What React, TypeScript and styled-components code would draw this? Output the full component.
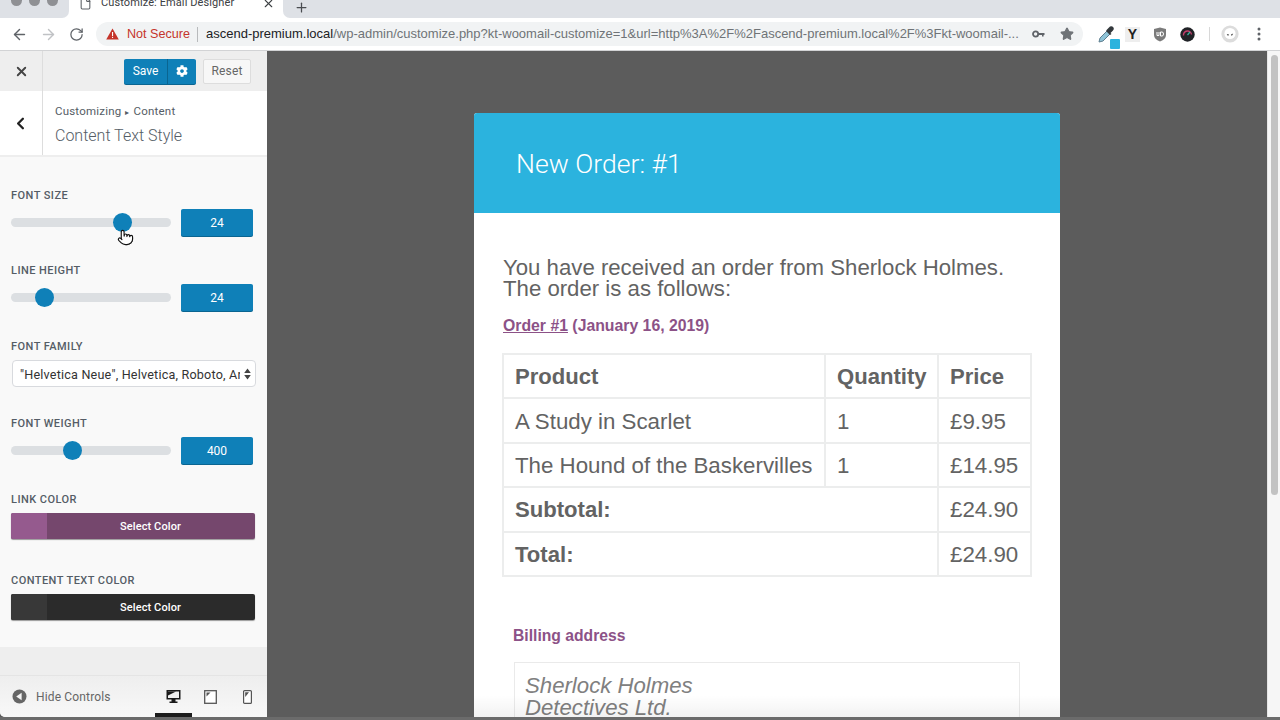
import React from 'react';
import styled, { createGlobalStyle } from 'styled-components';
import { ArrowLeft, ArrowRight, RotateCw, X, Plus, Star, File, ChevronLeft, Pointer } from 'lucide-react';
import { FaCog } from 'react-icons/fa';

const GlobalStyle = createGlobalStyle`
  html, body {
    margin: 0;
    padding: 0;
    height: 720px;
    overflow: hidden;
    background: #5c5c5c;
    font-family: Roboto, "Liberation Sans", sans-serif;
  }
`;

const Slider = ({ pos, value }: { pos: number; value: string }) => (
  <SliderRow>
    <Track>
      <Thumb $pos={pos} />
    </Track>
    <ValueBox>{value}</ValueBox>
  </SliderRow>
);

const ColorPicker = ({ color, swatch }: { color: string; swatch: string }) => (
  <ColorButton $color={color}>
    <Swatch $color={swatch} />
    <ColorLabel>Select Color</ColorLabel>
  </ColorButton>
);

const App = () => (
  <Window>
    <GlobalStyle />
    <TabStrip>
      <Lights>
        <Light />
        <Light />
        <Light />
      </Lights>
      <Tab>
        <File size={13} color="#5f6368" />
        <TabTitle>Customize: Email Designer</TabTitle>
        <X size={13} color="#3c4043" />
      </Tab>
      <NewTab>
        <Plus size={15} color="#4a4d51" />
      </NewTab>
    </TabStrip>

    <AddressRow>
      <NavIcons>
        <ArrowLeft size={17} color="#5f6368" />
        <ArrowRight size={17} color="#c0c2c5" />
        <RotateCw size={15} color="#5f6368" />
      </NavIcons>
      <Omnibox>
        <svg width="13" height="12" viewBox="0 0 13 12">
          <path d="M6.5 0.5 L12.8 11.5 H0.2 Z" fill="#c5352b" />
          <rect x="6" y="4" width="1.1" height="4" fill="#fff" />
          <rect x="6" y="8.8" width="1.1" height="1.2" fill="#fff" />
        </svg>
        <NotSecure>Not Secure</NotSecure>
        <UrlDivider />
        <Url>
          <UrlHost>ascend-premium.local</UrlHost>/wp-admin/customize.php?kt-woomail-customize=1&amp;url=http%3A%2F%2Fascend-premium.local%2F%3Fkt-woomail-...
        </Url>
        <OmniIcons>
          <svg width="13" height="8" viewBox="0 0 13 8">
            <circle cx="3.6" cy="4" r="2.6" fill="none" stroke="#5f6368" strokeWidth="1.8" />
            <path d="M6 3 H12.5 V5 H11.6 V6.4 H10 V5 H6 Z" fill="#5f6368" />
          </svg>
          <Star size={14} color="#6f7377" fill="#6f7377" />
        </OmniIcons>
      </Omnibox>
      <Extensions>
        <DropperIcon>
          <svg width="19" height="19" viewBox="0 0 19 19">
            <path d="M2 17 L3 13 L10 6 L13 9 L6 16 Z" fill="#8fc4d8" stroke="#5f7f90" strokeWidth="1" />
            <path d="M10 4.5 L13 1.5 Q15 0.5 16.5 2.5 Q17.5 4 16 5.5 L13.5 8 L14.5 9 L13 10 L9 6 Z" fill="#33383c" />
          </svg>
          <DropperBadge />
        </DropperIcon>
        <YoastIcon>Y</YoastIcon>
        <svg width="14" height="15" viewBox="0 0 14 15">
          <path d="M7 0.5 L13 2 V8 Q13 12 7 14.5 Q1 12 1 8 V2 Z" fill="#7b7b7b" />
          <path d="M4 5 V8.5 H6 V5 M7.5 5 V9 H9 Q10.5 9 10.5 7 Q10.5 5 9 5 Z" fill="none" stroke="#fff" strokeWidth="1" />
        </svg>
        <svg width="15" height="15" viewBox="0 0 15 15">
          <circle cx="7.5" cy="7.5" r="7.2" fill="#202226" />
          <path d="M3.5 8.5 A4 4 0 0 1 11.5 7.5" fill="none" stroke="#c43d6c" strokeWidth="1.4" />
          <path d="M7.5 8 L10 5" stroke="#35b4a0" strokeWidth="1.2" />
        </svg>
        <ToolbarDivider />
        <svg width="18" height="18" viewBox="0 0 18 18">
          <circle cx="9" cy="9" r="8.6" fill="#dcdcdc" />
          <circle cx="9" cy="8.5" r="5.6" fill="#fff" />
          <path d="M5.8 9 L8 9.6 L7 11 Z M12.2 8.6 L10 9.6 L10.8 11 Z" fill="#333" />
        </svg>
        <MoreDots width="4" height="14" viewBox="0 0 4 14">
          <circle cx="2" cy="2" r="1.5" fill="#5f6368" />
          <circle cx="2" cy="7" r="1.5" fill="#5f6368" />
          <circle cx="2" cy="12" r="1.5" fill="#5f6368" />
        </MoreDots>
      </Extensions>
    </AddressRow>

    <Page>
      <Sidebar>
        <SidebarTop>
          <CloseCell>
            <X size={15} strokeWidth={3} color="#444" />
          </CloseCell>
          <SaveGroup>
            <SaveButton>Save</SaveButton>
            <GearButton>
              <FaCog size={12} color="#fff" />
            </GearButton>
          </SaveGroup>
          <ResetButton>Reset</ResetButton>
        </SidebarTop>

        <SectionHead>
          <BackCell>
            <ChevronLeft size={19} strokeWidth={3} color="#222" />
          </BackCell>
          <SectionTitles>
            <Crumb>
              Customizing<CrumbArrow>▸</CrumbArrow>Content
            </Crumb>
            <SectionTitle>Content Text Style</SectionTitle>
          </SectionTitles>
        </SectionHead>

        <Controls>
          <Group $top={31}>
            <Label>Font Size</Label>
            <Slider pos={111} value="24" />
          </Group>
          <Group $top={27}>
            <Label>Line Height</Label>
            <Slider pos={33} value="24" />
          </Group>
          <Group $top={28}>
            <Label>Font Family</Label>
            <SelectBox>
              <SelectText>"Helvetica Neue", Helvetica, Roboto, Arial, sans-serif</SelectText>
              <svg width="7" height="12" viewBox="0 0 7 12">
                <path d="M3.5 0.5 L6.8 5 H0.2 Z M3.5 11.5 L6.8 7 H0.2 Z" fill="#444" />
              </svg>
            </SelectBox>
          </Group>
          <Group $top={29}>
            <Label>Font Weight</Label>
            <Slider pos={61} value="400" />
          </Group>
          <Group $top={28}>
            <Label>Link Color</Label>
            <ColorPicker color="#75476d" swatch="#955a8e" />
          </Group>
          <Group $top={34}>
            <Label>Content Text Color</Label>
            <ColorPicker color="#2b2b2b" swatch="#383838" />
          </Group>
        </Controls>

        <SidebarGap />

        <SidebarFooter>
          <HideControls>
            <svg width="15" height="15" viewBox="0 0 15 15">
              <circle cx="7.5" cy="7.5" r="7" fill="#666" />
              <path d="M9.6 3.8 V11.2 L4.2 7.5 Z" fill="#f4f4f4" />
            </svg>
            <HideLabel>Hide Controls</HideLabel>
          </HideControls>
          <DeviceTabs>
            <DeviceTab $active>
              <svg width="15" height="15" viewBox="0 0 15 15">
                <path d="M0.5 1 H14.5 V10.5 H9.5 V12.5 H11.5 V14 H3.5 V12.5 H5.5 V10.5 H0.5 Z" fill="#1a1a1a" />
                <path d="M2 2.5 H13 V9 H2 Z" fill="#f0f0f0" />
                <path d="M2 2.5 H10 L2 6.5 Z" fill="#1a1a1a" />
              </svg>
            </DeviceTab>
            <DeviceTab>
              <svg width="13" height="14" viewBox="0 0 13 14">
                <rect x="0.7" y="0.7" width="11.6" height="12.6" fill="#fff" stroke="#555" strokeWidth="1.3" />
                <path d="M2.5 2.5 H6.5 L2.5 6.5 Z" fill="#555" />
              </svg>
            </DeviceTab>
            <DeviceTab>
              <svg width="9" height="14" viewBox="0 0 9 14">
                <rect x="0.6" y="0.6" width="7.8" height="12.8" rx="1" fill="#fff" stroke="#555" strokeWidth="1.2" />
                <path d="M2.2 2.2 H6 L2.2 7 Z" fill="#555" />
              </svg>
            </DeviceTab>
          </DeviceTabs>
        </SidebarFooter>
      </Sidebar>

      <Preview>
        <EmailCard>
          <EmailHeader>New Order: #1</EmailHeader>
          <EmailBody>
            <Intro>
              You have received an order from Sherlock Holmes.
              <br />
              The order is as follows:
            </Intro>
            <OrderLine>
              <OrderLink>Order #1</OrderLink> (January 16, 2019)
            </OrderLine>
            <OrderTable>
              <colgroup>
                <col style={{ width: 322 }} />
                <col style={{ width: 113 }} />
                <col style={{ width: 93 }} />
              </colgroup>
              <tbody>
                <tr>
                  <HeadCell>Product</HeadCell>
                  <HeadCell>Quantity</HeadCell>
                  <HeadCell>Price</HeadCell>
                </tr>
                <tr>
                  <Cell>A Study in Scarlet</Cell>
                  <Cell>1</Cell>
                  <Cell>£9.95</Cell>
                </tr>
                <tr>
                  <Cell>The Hound of the Baskervilles</Cell>
                  <Cell>1</Cell>
                  <Cell>£14.95</Cell>
                </tr>
                <tr>
                  <HeadCell colSpan={2}>Subtotal:</HeadCell>
                  <Cell>£24.90</Cell>
                </tr>
                <tr>
                  <HeadCell colSpan={2}>Total:</HeadCell>
                  <Cell>£24.90</Cell>
                </tr>
              </tbody>
            </OrderTable>
            <BillingTitle>Billing address</BillingTitle>
            <AddressBox>
              Sherlock Holmes
              <br />
              Detectives Ltd.
            </AddressBox>
          </EmailBody>
        </EmailCard>
        <BottomFade />
      </Preview>

      <ScrollTrack>
        <ScrollThumb />
      </ScrollTrack>

      <HandCursor>
        <Pointer size={17} color="#111" fill="#fff" strokeWidth={1.6} />
      </HandCursor>
    </Page>

    <BottomEdge />
  </Window>
);

export default App;

const Window = styled.div`
  display: flex;
  flex-direction: column;
  width: 1280px;
  height: 720px;
  overflow: hidden;
`;

const TabStrip = styled.div`
  display: flex;
  height: 18px;
  flex: none;
  background: #fff;
  overflow: hidden;
`;

const Lights = styled.div`
  display: flex;
  gap: 7px;
  width: 69px;
  height: 18px;
  flex: none;
  padding-left: 11px;
  box-sizing: border-box;
  background: #dee1e6;
  border-bottom-right-radius: 7px;
`;

const Light = styled.span`
  width: 11px;
  height: 11px;
  margin-top: -5px;
  border-radius: 50%;
  background: #8f9094;
`;

const Tab = styled.div`
  display: flex;
  width: 214px;
  height: 18px;
  flex: none;
  padding: 0 8px 0 10px;
  box-sizing: border-box;
  background: #fff;
  svg {
    margin-top: -3px;
    flex: none;
  }
`;

const TabTitle = styled.span`
  flex: 1;
  margin: -4px 0 0 9px;
  font-size: 11px;
  line-height: 14px;
  letter-spacing: 0.1px;
  color: #3c4043;
  white-space: nowrap;
`;

const NewTab = styled.div`
  flex: 1;
  height: 18px;
  padding-left: 11px;
  background: #dee1e6;
  border-bottom-left-radius: 7px;
  svg {
    margin-top: -4px;
  }
`;

const AddressRow = styled.div`
  display: flex;
  align-items: center;
  height: 33px;
  flex: none;
  box-sizing: border-box;
  background: #fff;
  border-bottom: 1px solid #d2d3d5;
  padding-left: 11px;
`;

const NavIcons = styled.div`
  display: flex;
  align-items: center;
  gap: 12px;
  width: 85px;
  flex: none;
`;

const Omnibox = styled.div`
  display: flex;
  align-items: center;
  width: 987px;
  height: 24px;
  flex: none;
  box-sizing: border-box;
  padding: 0 9px 0 10px;
  background: #f1f3f4;
  border-radius: 12px;
  font-family: "Liberation Sans", Arial, sans-serif;
  font-size: 13px;
`;

const NotSecure = styled.span`
  margin-left: 8px;
  font-size: 12.6px;
  color: #c5352b;
  white-space: nowrap;
`;

const UrlDivider = styled.span`
  width: 1px;
  height: 15px;
  margin: 0 8px 0 7px;
  background: #b8babc;
`;

const Url = styled.span`
  flex: 1;
  min-width: 0;
  margin-top: -1px;
  overflow: hidden;
  white-space: nowrap;
  color: #6f7377;
`;

const UrlHost = styled.span`
  color: #202124;
`;

const OmniIcons = styled.div`
  display: flex;
  align-items: center;
  gap: 15px;
  margin-left: 12px;
  flex: none;
`;

const Extensions = styled.div`
  display: flex;
  align-items: center;
  gap: 13px;
  margin-left: 14px;
`;

const DropperIcon = styled.div`
  position: relative;
  width: 19px;
  height: 19px;
  margin-right: -4px;
`;

const DropperBadge = styled.span`
  position: absolute;
  right: -4px;
  bottom: -5px;
  width: 10px;
  height: 10px;
  background: #2bb3de;
  border-radius: 1px;
`;

const YoastIcon = styled.span`
  width: 15px;
  height: 15px;
  font-family: "Liberation Sans", Arial, sans-serif;
  font-size: 14px;
  line-height: 15px;
  font-weight: 700;
  text-align: center;
  color: #222;
  background: #eee;
`;

const ToolbarDivider = styled.span`
  width: 1px;
  height: 14px;
  background: #d8d8d8;
  margin: 0 -2px 0 1px;
`;

const MoreDots = styled.svg`
  margin-left: 5px;
`;

const Page = styled.div`
  position: relative;
  display: flex;
  flex: 1;
  min-height: 0;
`;

const Sidebar = styled.aside`
  display: flex;
  flex-direction: column;
  width: 267px;
  flex: none;
  background: #eee;
  border-bottom-left-radius: 5px;
  overflow: hidden;
`;

const SidebarTop = styled.div`
  display: flex;
  align-items: center;
  height: 40px;
  flex: none;
  background: #eee;
`;

const CloseCell = styled.div`
  display: flex;
  align-items: center;
  justify-content: center;
  width: 43px;
  height: 40px;
  flex: none;
  box-sizing: border-box;
  border-right: 1px solid #ddd;
`;

const SaveGroup = styled.div`
  display: flex;
  height: 25px;
  margin-left: 81px;
  border-radius: 2px;
  overflow: hidden;
  background: #0f80b8;
  box-shadow: 0 1px 0 #0a6591;
`;

const SaveButton = styled.div`
  display: flex;
  align-items: center;
  justify-content: center;
  width: 44px;
  box-sizing: border-box;
  font-size: 12px;
  color: #fff;
  border-right: 1px solid #0a6591;
`;

const GearButton = styled.div`
  display: flex;
  align-items: center;
  justify-content: center;
  width: 28px;
`;

const ResetButton = styled.div`
  display: flex;
  align-items: center;
  justify-content: center;
  width: 48px;
  height: 25px;
  margin-left: 7px;
  box-sizing: border-box;
  border: 1px solid #ddd;
  border-radius: 2px;
  background: #f7f7f7;
  font-size: 12px;
  letter-spacing: 0.2px;
  color: #666;
`;

const SectionHead = styled.div`
  display: flex;
  height: 66px;
  flex: none;
  box-sizing: border-box;
  background: #fff;
  border-bottom: 2px solid #eee;
`;

const BackCell = styled.div`
  display: flex;
  align-items: center;
  justify-content: center;
  width: 43px;
  flex: none;
  box-sizing: border-box;
  padding-right: 2px;
  border-right: 1px solid #ddd;
`;

const SectionTitles = styled.div`
  display: flex;
  flex-direction: column;
  padding: 13px 0 0 12px;
`;

const Crumb = styled.span`
  font-size: 11.5px;
  line-height: 15px;
  letter-spacing: 0.2px;
  color: #555d66;
`;

const CrumbArrow = styled.span`
  margin: 0 4px;
  font-size: 8px;
`;

const SectionTitle = styled.span`
  margin-top: 5px;
  font-size: 16px;
  line-height: 22px;
  font-weight: 300;
  color: #555d66;
`;

const Controls = styled.div`
  flex: none;
  height: 490px;
  box-sizing: border-box;
  background: #f9f9f9;
  overflow: hidden;
`;

const Group = styled.div<{ $top: number }>`
  margin-top: ${props => props.$top}px;
  padding: 0 11px;
`;

const Label = styled.div`
  height: 14px;
  margin-bottom: 7px;
  font-size: 11px;
  line-height: 15px;
  font-weight: 500;
  letter-spacing: 0.45px;
  text-transform: uppercase;
  color: #555d66;
`;

const SliderRow = styled.div`
  display: flex;
  align-items: center;
  height: 27px;
`;

const Track = styled.div`
  position: relative;
  width: 160px;
  height: 9px;
  border-radius: 5px;
  background: #dcdfe2;
`;

const Thumb = styled.span<{ $pos: number }>`
  position: absolute;
  top: -5px;
  left: ${props => props.$pos - 9}px;
  width: 19px;
  height: 19px;
  border-radius: 50%;
  background: #0f80b8;
`;

const ValueBox = styled.div`
  display: flex;
  align-items: center;
  justify-content: center;
  width: 72px;
  height: 27px;
  margin-left: 10px;
  border-radius: 2px;
  background: #0f80b8;
  box-shadow: 0 1px 0 #0a6591;
  font-size: 12px;
  color: #fff;
`;

const SelectBox = styled.div`
  display: flex;
  align-items: center;
  width: 244px;
  height: 27px;
  margin-left: 1px;
  box-sizing: border-box;
  padding: 1px 4px 0 7px;
  border: 1px solid #d8dade;
  border-radius: 4px;
  background: #fff;
  font-size: 12.6px;
  letter-spacing: 0.2px;
  color: #333;
`;

const SelectText = styled.span`
  flex: 1;
  min-width: 0;
  margin-right: 4px;
  overflow: hidden;
  white-space: nowrap;
`;

const ColorButton = styled.div<{ $color: string }>`
  display: flex;
  width: 244px;
  height: 26px;
  border-radius: 2px;
  overflow: hidden;
  background: ${props => props.$color};
  box-shadow: 0 1px 1px #999;
`;

const Swatch = styled.span<{ $color: string }>`
  width: 36px;
  background: ${props => props.$color};
`;

const ColorLabel = styled.span`
  flex: 1;
  align-self: center;
  margin-right: 1px;
  text-align: center;
  font-size: 11px;
  font-weight: 500;
  letter-spacing: 0.1px;
  color: #fff;
`;

const SidebarGap = styled.div`
  height: 28px;
  flex: none;
  background: #eee;
  border-bottom: 1px solid #e4e4e4;
`;

const SidebarFooter = styled.div`
  display: flex;
  flex: 1;
  align-items: center;
  justify-content: space-between;
  background: linear-gradient(#eeeeee, #f8f8f8);
`;

const HideControls = styled.div`
  display: flex;
  align-items: center;
  padding-left: 12px;
`;

const HideLabel = styled.span`
  margin-left: 9px;
  font-size: 12px;
  letter-spacing: 0.15px;
  color: #666;
`;

const DeviceTabs = styled.div`
  display: flex;
  align-self: stretch;
  margin-right: 1px;
`;

const DeviceTab = styled.div<{ $active?: boolean }>`
  display: flex;
  align-items: center;
  justify-content: center;
  width: 37px;
  box-sizing: border-box;
  padding-top: ${props => (props.$active ? 0 : 4)}px;
  padding-bottom: ${props => (props.$active ? 0 : 4)}px;
  border-bottom: ${props => (props.$active ? '4px solid #1d1d1d' : '0')};
  border-top: ${props => (props.$active ? '4px solid transparent' : '0')};
`;

const Preview = styled.main`
  position: relative;
  flex: 1;
  min-width: 0;
  padding-top: 62px;
  overflow: hidden;
  background: #5c5c5c;
`;

const EmailCard = styled.div`
  width: 586px;
  margin: 0 auto;
  background: #fff;
  border-radius: 3px 3px 0 0;
  overflow: hidden;
  font-family: "Liberation Sans", Arial, sans-serif;
  color: #636363;
`;

const EmailHeader = styled.div`
  height: 100px;
  padding-left: 42px;
  background: #2bb3de;
  font-family: Roboto, "Liberation Sans", sans-serif;
  font-size: 26.6px;
  line-height: 102px;
  font-weight: 300;
  color: #fff;
`;

const EmailBody = styled.div`
  padding: 44px 28px 0 29px;
`;

const Intro = styled.div`
  font-size: 22.2px;
  line-height: 21px;
`;

const OrderLine = styled.div`
  margin-top: 17px;
  font-size: 15.8px;
  line-height: 20px;
  font-weight: 700;
  color: #8c5287;
`;

const OrderLink = styled.span`
  text-decoration: underline;
`;

const OrderTable = styled.table`
  width: 528px;
  margin: 17px 0 0 -1px;
  border-collapse: collapse;
  table-layout: fixed;
  border: 2px solid #eceded;
`;

const Cell = styled.td`
  height: 44.4px;
  box-sizing: border-box;
  padding: 2px 10px 0 11px;
  border: 2px solid #eceded;
  font-size: 22.3px;
  white-space: nowrap;
`;

const HeadCell = styled(Cell)`
  font-size: 22.1px;
  font-weight: 700;
`;

const BillingTitle = styled.div`
  margin: 49px 0 0 10px;
  font-size: 15.7px;
  line-height: 20px;
  font-weight: 700;
  color: #8c5287;
`;

const AddressBox = styled.div`
  margin: 16px 12px 0 11px;
  padding: 12px 10px 30px;
  border: 1px solid #eaeaea;
  font-size: 22.2px;
  line-height: 22px;
  font-style: italic;
  color: #808080;
`;

const BottomFade = styled.div`
  position: absolute;
  left: 207px;
  bottom: 0;
  width: 586px;
  height: 22px;
  background: linear-gradient(rgba(0, 0, 0, 0), rgba(0, 0, 0, 0.05));
  pointer-events: none;
`;

const ScrollTrack = styled.div`
  width: 13px;
  flex: none;
  box-sizing: border-box;
  padding: 4px 3px;
  background: #f6f6f6;
  border-left: 1px solid #e6e6e6;
`;

const ScrollThumb = styled.div`
  width: 7px;
  height: 440px;
  border-radius: 4px;
  background: #c2c2c2;
`;

const HandCursor = styled.div`
  position: absolute;
  left: 117px;
  top: 178px;
  line-height: 0;
`;

const BottomEdge = styled.div`
  height: 3px;
  flex: none;
  background: #6b6b6b;
`;
